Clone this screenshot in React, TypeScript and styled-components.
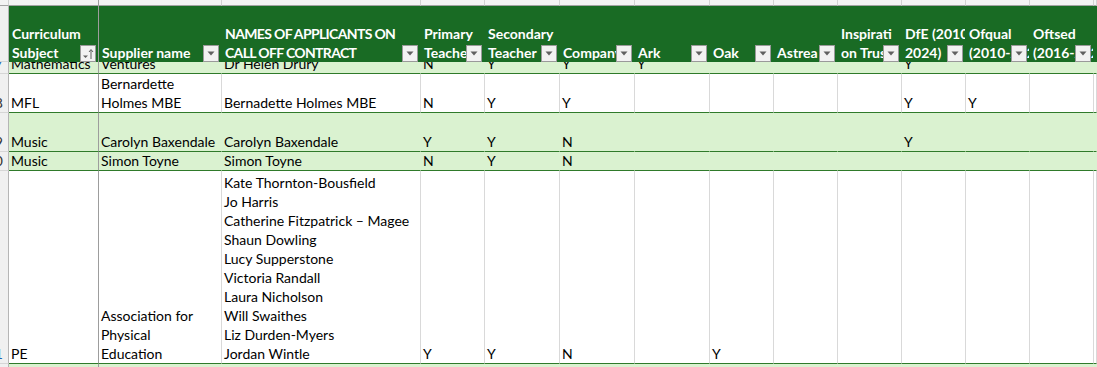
import React from "react";
import styled, { createGlobalStyle } from "styled-components";

const COLS = "9px 90px 123px 199px 64px 75px 75px 75px 64px 64px 64px 64px 64px 64px 1fr";
const NCOLS = 14;

const Global = createGlobalStyle`
  *, *::before, *::after { box-sizing: border-box; }
  html, body { margin: 0; padding: 0; background: #fff; }
  body { font-family: Lato, "Liberation Sans", Arial, sans-serif; }
`;

const Sheet = styled.div`
  width: 1097px;
  height: 367px;
  overflow: hidden;
  display: flex;
  flex-direction: column;
  font-family: Lato, "Liberation Sans", Arial, sans-serif;
  font-size: 14px;
  line-height: 19px;
  color: #000;
`;

const Row = styled.div<{ $h: number }>`
  display: grid;
  grid-template-columns: ${COLS};
  height: ${(p) => p.$h}px;
  flex: none;
`;

const StripCell = styled.div<{ $freeze?: boolean }>`
  background: #f3f3f3;
  border-right: 1px solid ${(p) => (p.$freeze ? "#9d9d9d" : "#d2d2d2")};
  border-bottom: 1px solid #a3a3a3;
`;

const RowHead = styled.div<{ $active?: boolean }>`
  background: #f0f0f0;
  border-right: 1px solid #b5b5b5;
  border-bottom: 1px solid #d6d6d6;
  display: flex;
  flex-direction: column;
  justify-content: flex-end;
  align-items: flex-end;
  padding-right: 5px;
  overflow: hidden;
  white-space: pre;
  color: ${(p) => (p.$active ? "#1d63b3" : "#333")};
`;

const HeadCell = styled.div<{ $freeze?: boolean; $caps?: boolean }>`
  position: relative;
  background: #196b24;
  color: #fff;
  font-weight: 700;
  letter-spacing: ${(p) => (p.$caps ? "-0.65px" : "0")};
  display: flex;
  flex-direction: column;
  justify-content: flex-end;
  padding-left: 3px;
  overflow: hidden;
  white-space: pre;
  border-right: 1px solid ${(p) => (p.$freeze ? "#9d9d9d" : "#196b24")};
`;

const DataCell = styled.div<{ $band: boolean; $freeze?: boolean }>`
  background: ${(p) => (p.$band ? "#daf2d0" : "#fff")};
  border-bottom: 1px solid #2f7a2a;
  border-right: 1px solid
    ${(p) => (p.$freeze ? "#9d9d9d" : p.$band ? "#daf2d0" : "#d9d9d9")};
  display: flex;
  flex-direction: column;
  justify-content: flex-end;
  padding-left: 2px;
  overflow: hidden;
  white-space: pre;
`;

const Line = styled.span`
  display: block;
`;

const FilterButton = styled.div`
  position: absolute;
  right: 2px;
  bottom: 0;
  width: 16px;
  height: 17px;
  background: #f2f2f2;
  border: 1px solid #9a9a9a;
  display: flex;
  align-items: center;
  justify-content: center;
`;

const DropIcon = () => (
  <svg width="8" height="5" viewBox="0 0 8 5">
    <path d="M0.5 0.5 H7.5 L4 4.5 Z" fill="#606060" />
  </svg>
);

const SortIcon = () => (
  <svg width="12" height="12" viewBox="0 0 12 12">
    <path d="M1 7.5 H6 L3.5 10 Z" fill="#606060" />
    <path d="M9 11 V2" stroke="#606060" strokeWidth="1" />
    <path d="M7 4 L9 1.5 L11 4" stroke="#606060" strokeWidth="1" fill="none" />
  </svg>
);

type Head = { lines: string[]; button?: "drop" | "sort"; caps?: boolean };

const headers: Head[] = [
  { lines: ["Curriculum", "Subject"], button: "sort" },
  { lines: ["Supplier name"], button: "drop" },
  { lines: ["NAMES OF APPLICANTS ON", "CALL OFF CONTRACT"], button: "drop", caps: true },
  { lines: ["Primary", "Teacher"], button: "drop" },
  { lines: ["Secondary", "Teacher"], button: "drop" },
  { lines: ["Company"], button: "drop" },
  { lines: ["Ark"], button: "drop" },
  { lines: ["Oak"], button: "drop" },
  { lines: ["Astrea"], button: "drop" },
  { lines: ["Inspirati", "on Trust"], button: "drop" },
  { lines: ["DfE (2010-", "2024)"], button: "drop" },
  { lines: ["Ofqual", "(2010-2024)"], button: "drop" },
  { lines: ["Oftsed", "(2016-2024)"], button: "drop" },
  { lines: [] },
];

type DataRow = {
  num: string;
  active?: boolean;
  band: boolean;
  h: number;
  cells: Record<number, string[]>;
};

const rows: DataRow[] = [
  {
    num: "17",
    active: true,
    band: true,
    h: 12,
    cells: {
      0: ["Mathematics"],
      1: ["Ventures"],
      2: ["Dr Helen Drury"],
      3: ["N"],
      4: ["Y"],
      5: ["Y"],
      6: ["Y"],
      10: ["Y"],
    },
  },
  {
    num: "18",
    band: false,
    h: 39,
    cells: {
      0: ["MFL"],
      1: ["Bernardette", "Holmes MBE"],
      2: ["Bernadette Holmes MBE"],
      3: ["N"],
      4: ["Y"],
      5: ["Y"],
      10: ["Y"],
      11: ["Y"],
    },
  },
  {
    num: "19",
    band: true,
    h: 39,
    cells: {
      0: ["Music"],
      1: ["Carolyn Baxendale"],
      2: ["Carolyn Baxendale"],
      3: ["Y"],
      4: ["Y"],
      5: ["N"],
      10: ["Y"],
    },
  },
  {
    num: "20",
    band: true,
    h: 19,
    cells: {
      0: ["Music"],
      1: ["Simon Toyne"],
      2: ["Simon Toyne"],
      3: ["N"],
      4: ["Y"],
      5: ["N"],
    },
  },
  {
    num: "21",
    active: true,
    band: false,
    h: 193,
    cells: {
      0: ["PE"],
      1: ["Association for", "Physical", "Education"],
      2: [
        "Kate Thornton-Bousfield",
        "Jo Harris",
        "Catherine Fitzpatrick \u2013 Magee",
        "Shaun Dowling",
        "Lucy Supperstone",
        "Victoria Randall",
        "Laura Nicholson",
        "Will Swaithes",
        "Liz Durden-Myers",
        "Jordan Wintle",
      ],
      3: ["Y"],
      4: ["Y"],
      5: ["N"],
      7: ["Y"],
    },
  },
  { num: "22", band: true, h: 19, cells: {} },
];

const colIdx = Array.from({ length: NCOLS }, (_, i) => i);

export default function App() {
  return (
    <>
      <Global />
      <Sheet>
        <Row $h={6}>
          <StripCell />
          {colIdx.map((i) => (
            <StripCell key={i} $freeze={i === 0} />
          ))}
        </Row>
        <Row $h={56}>
          <RowHead />
          {headers.map((h, i) => (
            <HeadCell key={i} $freeze={i === 0} $caps={h.caps}>
              {h.lines.map((l, j) => (
                <Line key={j}>{l}</Line>
              ))}
              {h.button && (
                <FilterButton>
                  {h.button === "sort" ? <SortIcon /> : <DropIcon />}
                </FilterButton>
              )}
            </HeadCell>
          ))}
        </Row>
        {rows.map((r) => (
          <Row key={r.num} $h={r.h}>
            <RowHead $active={r.active}>
              <Line>{r.num}</Line>
            </RowHead>
            {colIdx.map((i) => (
              <DataCell key={i} $band={r.band} $freeze={i === 0}>
                {(r.cells[i] || []).map((l, j) => (
                  <Line key={j}>{l}</Line>
                ))}
              </DataCell>
            ))}
          </Row>
        ))}
      </Sheet>
    </>
  );
}
